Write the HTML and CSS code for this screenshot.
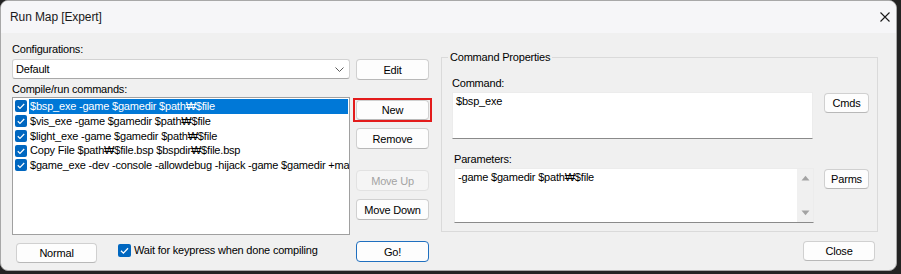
FILE: index.html
```html
<!DOCTYPE html>
<html lang="en">
<head>
    <meta charset="UTF-8">
    <title>Run Map [Expert]</title>
    <link rel="stylesheet" href="styles.css">
</head>
<body>
    <div class="window">
        <div class="titlebar">
            <span class="title">Run Map [Expert]</span>
            <svg class="close-x" width="10" height="10" viewBox="0 0 10 10">
                <path d="M0.5 0.5 L9.5 9.5 M9.5 0.5 L0.5 9.5" stroke="#1a1a1a" stroke-width="1.1" fill="none"/>
            </svg>
        </div>

        <div class="main">
            <div class="left-col">
                <div class="label">Configurations:</div>
                <div class="select">
                    <span>Default</span>
                    <svg width="9" height="5" viewBox="0 0 9 5">
                        <path d="M0.5 0.5 L4.5 4.5 L8.5 0.5" stroke="#5a5a5a" stroke-width="1" fill="none"/>
                    </svg>
                </div>
                <div class="label label-list">Compile/run commands:</div>
                <ul class="cmd-list">
                    <li class="selected">
                        <span class="check"><svg width="13" height="13" viewBox="0 0 13 13"><path d="M3 6.8 L5.4 9.1 L10 4.3" stroke="#fff" stroke-width="1.3" fill="none"/></svg></span>
                        <span class="item-text">$bsp_exe -game $gamedir $path₩$file</span>
                    </li>
                    <li>
                        <span class="check"><svg width="13" height="13" viewBox="0 0 13 13"><path d="M3 6.8 L5.4 9.1 L10 4.3" stroke="#fff" stroke-width="1.3" fill="none"/></svg></span>
                        <span class="item-text">$vis_exe -game $gamedir $path₩$file</span>
                    </li>
                    <li>
                        <span class="check"><svg width="13" height="13" viewBox="0 0 13 13"><path d="M3 6.8 L5.4 9.1 L10 4.3" stroke="#fff" stroke-width="1.3" fill="none"/></svg></span>
                        <span class="item-text">$light_exe -game $gamedir $path₩$file</span>
                    </li>
                    <li>
                        <span class="check"><svg width="13" height="13" viewBox="0 0 13 13"><path d="M3 6.8 L5.4 9.1 L10 4.3" stroke="#fff" stroke-width="1.3" fill="none"/></svg></span>
                        <span class="item-text">Copy File $path₩$file.bsp $bspdir₩$file.bsp</span>
                    </li>
                    <li>
                        <span class="check"><svg width="13" height="13" viewBox="0 0 13 13"><path d="M3 6.8 L5.4 9.1 L10 4.3" stroke="#fff" stroke-width="1.3" fill="none"/></svg></span>
                        <span class="item-text">$game_exe -dev -console -allowdebug -hijack -game $gamedir +map $file</span>
                    </li>
                </ul>
            </div>

            <div class="mid-col">
                <button class="btn">Edit</button>
                <div class="highlight">
                    <button class="btn btn-new">New</button>
                </div>
                <button class="btn btn-remove">Remove</button>
                <button class="btn btn-up" disabled>Move Up</button>
                <button class="btn btn-down">Move Down</button>
            </div>

            <fieldset class="props">
                <legend>Command Properties</legend>
                <div class="prop-row">
                    <div class="prop-field field-cmd">
                        <div class="label">Command:</div>
                        <div class="textbox box-cmd">$bsp_exe</div>
                    </div>
                    <button class="btn btn-side">Cmds</button>
                </div>
                <div class="prop-row row-params">
                    <div class="prop-field field-params">
                        <div class="label">Parameters:</div>
                        <div class="textbox box-params">
                            <span class="box-text">-game $gamedir $path₩$file</span>
                            <div class="scrollbar">
                                <svg width="9" height="6" viewBox="0 0 9 6"><path d="M0.5 5.5 L4.5 0.8 L8.5 5.5 Z" fill="#a3a3a3"/></svg>
                                <svg width="9" height="6" viewBox="0 0 9 6"><path d="M0.5 0.5 L4.5 5.2 L8.5 0.5 Z" fill="#a3a3a3"/></svg>
                            </div>
                        </div>
                    </div>
                    <button class="btn btn-side">Parms</button>
                </div>
            </fieldset>
        </div>

        <div class="footer">
            <div class="footer-left">
                <button class="btn btn-normal">Normal</button>
                <label class="wait">
                    <span class="check"><svg width="13" height="13" viewBox="0 0 13 13"><path d="M3 6.8 L5.4 9.1 L10 4.3" stroke="#fff" stroke-width="1.3" fill="none"/></svg></span>
                    <span>Wait for keypress when done compiling</span>
                </label>
            </div>
            <button class="btn btn-go">Go!</button>
            <button class="btn btn-close">Close</button>
        </div>
    </div>
</body>
</html>
```

FILE: styles.css
```css
body {
    margin: 0;
    width: 901px;
    height: 274px;
    overflow: hidden;
    background: #232323;
    font-family: "Liberation Sans", "DejaVu Sans", "Noto Sans CJK KR", sans-serif;
    font-size: 11px;
    letter-spacing: -0.2px;
    color: #000;
}
.window {
    box-sizing: border-box;
    width: 897px;
    height: 271px;
    background: #f0f0f0;
    border: 1px solid #a8a8a8;
    border-radius: 8px;
    overflow: hidden;
}
.titlebar {
    height: 31px;
    display: flex;
    align-items: center;
    justify-content: space-between;
    padding: 0 6px 1px 9px;
    background: #f6f6f8;
}
.title {
    font-size: 12px;
    letter-spacing: -0.1px;
    color: #1a1a1a;
}
.main {
    display: flex;
    align-items: flex-start;
}
.label {
    line-height: 13px;
    height: 13px;
    white-space: nowrap;
}
.left-col {
    margin-left: 11px;
    width: 338px;
    padding-top: 10px;
}
.select {
    box-sizing: border-box;
    margin-top: 3px;
    height: 20px;
    display: flex;
    align-items: center;
    justify-content: space-between;
    padding: 0 5px 0 3px;
    background: #fff;
    border: 1px solid #d2d2d2;
    border-bottom-color: #a8a8a8;
    border-radius: 3px;
}
.label-list {
    margin-top: 4px;
}
.cmd-list {
    box-sizing: border-box;
    list-style: none;
    margin: 1px 0 0 0;
    padding: 1px 0 0 0;
    height: 138px;
    background: #fff;
    border: 1px solid #a0a0a0;
    overflow: hidden;
}
.cmd-list li {
    display: flex;
    align-items: center;
    height: 14.75px;
}
.check {
    flex: none;
    width: 13px;
    height: 13px;
    background: #0067c0;
    border-radius: 2px;
    display: flex;
}
.cmd-list .check {
    margin-left: 2px;
    width: 12px;
    height: 12px;
}
.cmd-list .check svg {
    width: 12px;
    height: 12px;
}
.item-text {
    flex: 1;
    margin-left: 2px;
    padding-left: 1px;
    line-height: 14.75px;
    white-space: nowrap;
    overflow: hidden;
}
.selected .item-text {
    background: #0078d7;
    color: #fff;
    margin-right: 1px;
}
.btn {
    box-sizing: border-box;
    display: block;
    height: 21px;
    padding: 0;
    font-family: inherit;
    font-size: 11px;
    letter-spacing: -0.2px;
    color: #000;
    background: #fdfdfd;
    border: 1px solid #d0d0d0;
    border-bottom-color: #b8b8b8;
    border-radius: 4px;
}
.btn:disabled {
    color: #a3a3a3;
    background: #f5f5f5;
    border-color: #e2e2e2;
}
.mid-col {
    margin-left: 6px;
    width: 73px;
    padding-top: 26px;
    display: flex;
    flex-direction: column;
}
.mid-col .btn {
    width: 73px;
}
.highlight {
    margin: 18px 0 0 -3px;
    width: 79px;
    box-sizing: border-box;
    padding: 0 1px;
    border: 2px solid #e31b1b;
}
.mid-col .btn-new {
    height: 20px;
}
.btn-remove {
    margin-top: 6px;
}
.btn-up {
    margin-top: 21px;
}
.btn-down {
    margin-top: 8px;
}
.props {
    box-sizing: border-box;
    margin: 18px 0 0 12px;
    width: 437px;
    padding: 13px 8px 8px 10px;
    border: 1px solid #dadada;
    min-inline-size: 0;
}
.props legend {
    margin-left: -4px;
    padding: 0 2px;
    line-height: 13px;
}
.prop-row {
    display: flex;
    align-items: flex-start;
}
.row-params {
    margin-top: 14px;
}
.field-cmd {
    width: 361px;
}
.field-params {
    margin-left: 2px;
    width: 360px;
}
.textbox {
    box-sizing: border-box;
    margin-top: 2px;
    background: #fff;
    border: 1px solid #ececec;
    border-bottom-color: #8a8a8a;
    padding: 2px 3px;
    line-height: 13px;
}
.box-cmd {
    height: 47px;
}
.box-params {
    height: 55px;
    display: flex;
    padding: 0;
}
.box-text {
    flex: 1;
    padding: 2px 3px;
}
.scrollbar {
    width: 16px;
    background: #f0f0f0;
    display: flex;
    flex-direction: column;
    align-items: center;
    justify-content: space-between;
    padding: 6px 0 6px 0;
}
.btn-side {
    margin: 16px 0 0 auto;
    width: 45px;
    height: 20px;
}
.footer {
    display: flex;
    align-items: flex-start;
    padding-top: 6px;
}
.footer-left {
    width: 355px;
    display: flex;
    align-items: flex-start;
}
.btn-normal {
    margin: 2px 0 0 15px;
    width: 81px;
    height: 20px;
}
.wait {
    margin: 3px 0 0 21px;
    display: flex;
    align-items: center;
    gap: 3px;
    white-space: nowrap;
    line-height: 13px;
}
.btn-go {
    width: 73px;
    border-color: #1f6fbf;
}
.btn-close {
    margin: 0 21px 0 auto;
    width: 72px;
    height: 20px;
}
```
